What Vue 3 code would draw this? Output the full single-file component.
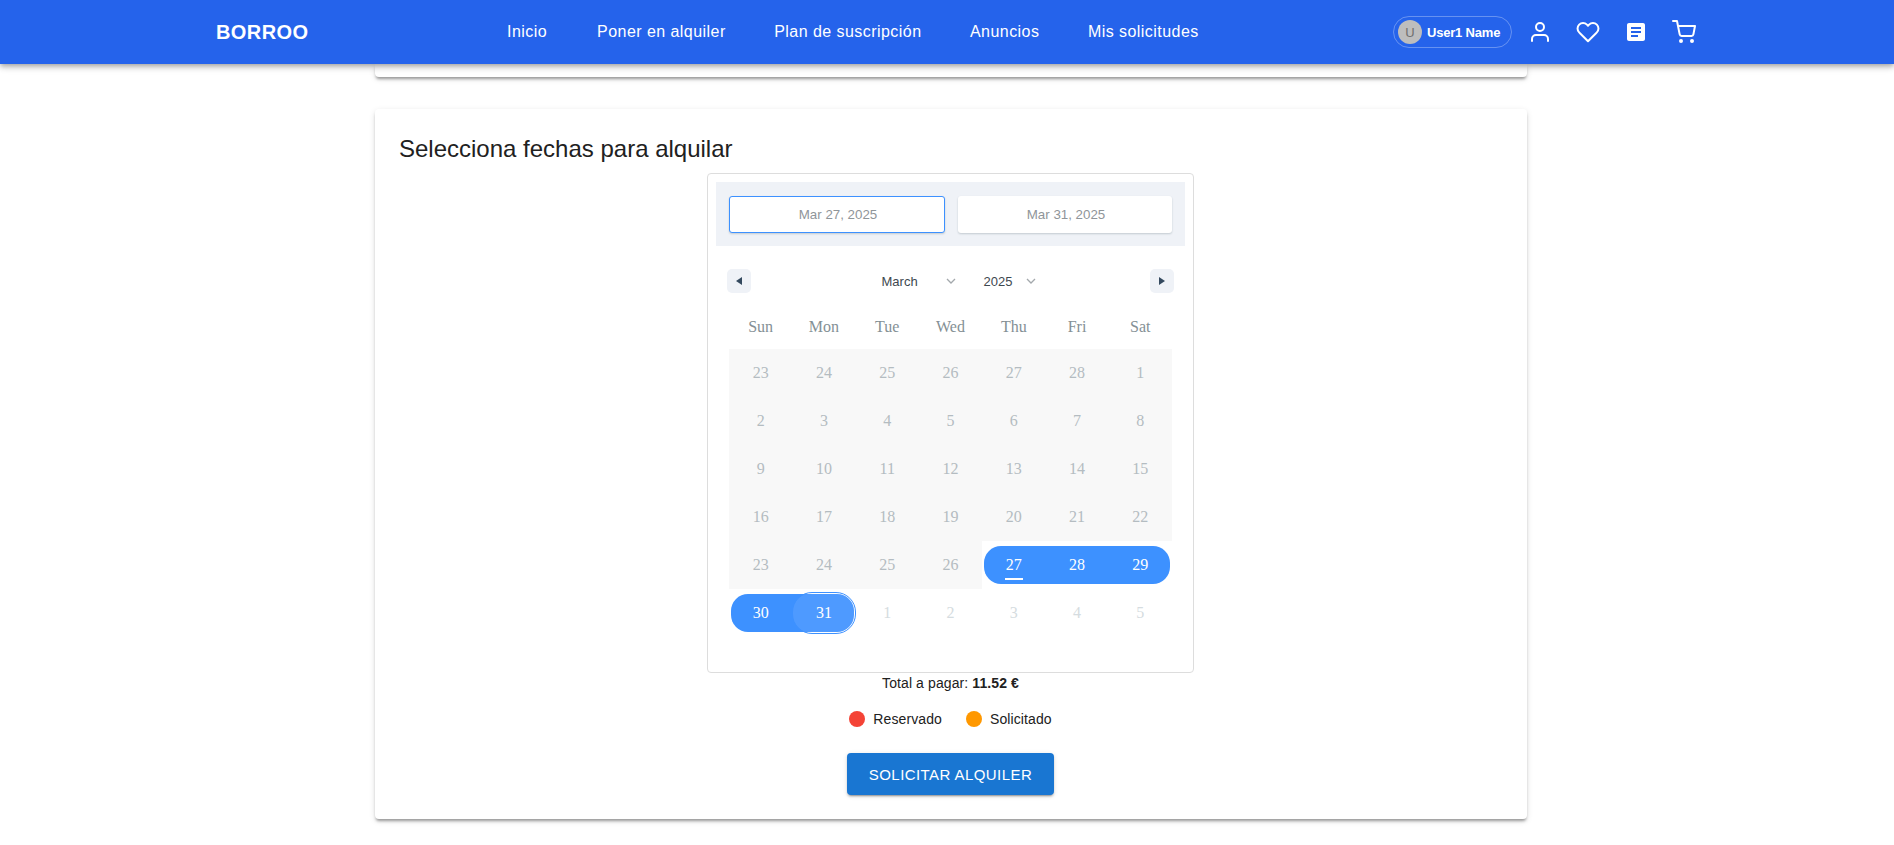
<script setup>
const links = ["Inicio", "Poner en alquiler", "Plan de suscripción", "Anuncios", "Mis solicitudes"];
const weekdays = ["Sun", "Mon", "Tue", "Wed", "Thu", "Fri", "Sat"];

// disabled = greyed past days, passive = next month
const days = [];
const numbers = [23, 24, 25, 26, 27, 28, 1, 2, 3, 4, 5, 6, 7, 8, 9, 10, 11, 12, 13, 14, 15, 16, 17, 18, 19, 20, 21, 22, 23, 24, 25, 26];
numbers.forEach((n) => days.push({ n, state: "disabled" }));
days.push({ n: 27, state: "range", start: true, today: true });
days.push({ n: 28, state: "range" });
days.push({ n: 29, state: "range", end: true });
days.push({ n: 30, state: "range", start: true });
days.push({ n: 31, state: "range", end: true, preview: true });
[1, 2, 3, 4, 5].forEach((n) => days.push({ n, state: "passive" }));
</script>

<template>
  <div class="page">
    <header class="topbar">
      <div class="logo">BORROO</div>
      <nav class="links">
        <a v-for="link in links" :key="link">{{ link }}</a>
      </nav>
      <div class="actions">
        <div class="chip">
          <span class="avatar">U</span>
          <span class="chip-name">User1 Name</span>
        </div>
        <svg class="icon" viewBox="0 0 24 24">
          <path d="M20 21v-2a4 4 0 0 0-4-4H8a4 4 0 0 0-4 4v2" />
          <circle cx="12" cy="7" r="4" />
        </svg>
        <svg class="icon" viewBox="0 0 24 24">
          <path d="M20.84 4.61a5.5 5.5 0 0 0-7.78 0L12 5.67l-1.06-1.06a5.5 5.5 0 0 0-7.78 7.78l1.06 1.06L12 21.23l7.78-7.78 1.06-1.06a5.5 5.5 0 0 0 0-7.78z" />
        </svg>
        <svg class="icon filled" viewBox="0 0 24 24">
          <path d="M19 3H5c-1.1 0-2 .9-2 2v14c0 1.1.9 2 2 2h14c1.1 0 2-.9 2-2V5c0-1.1-.9-2-2-2zm-5 14H7v-2h7v2zm3-4H7v-2h10v2zm0-4H7V7h10v2z" />
        </svg>
        <svg class="icon" viewBox="0 0 24 24">
          <circle cx="9" cy="21" r="1" />
          <circle cx="20" cy="21" r="1" />
          <path d="M1 1h4l2.68 13.39a2 2 0 0 0 2 1.61h9.72a2 2 0 0 0 2-1.61L23 6H6" />
        </svg>
      </div>
    </header>

    <main class="content">
      <div class="card sliver"></div>

      <section class="card booking">
        <h2>Selecciona fechas para alquilar</h2>

        <div class="calendar">
          <div class="range-inputs">
            <div class="date-field active">Mar 27, 2025</div>
            <div class="date-field">Mar 31, 2025</div>
          </div>

          <div class="month-nav">
            <button class="nav-btn"><i class="arrow left"></i></button>
            <div class="pickers">
              <div class="picker month">
                <span>March</span>
                <svg class="chevron" viewBox="0 0 10 6"><path d="M1 1l4 4 4-4" /></svg>
              </div>
              <div class="picker year">
                <span>2025</span>
                <svg class="chevron" viewBox="0 0 10 6"><path d="M1 1l4 4 4-4" /></svg>
              </div>
            </div>
            <button class="nav-btn"><i class="arrow right"></i></button>
          </div>

          <div class="weekdays">
            <span v-for="day in weekdays" :key="day">{{ day }}</span>
          </div>

          <div class="days">
            <div v-for="(day, i) in days" :key="i" class="day" :class="day.state">
              <span v-if="day.state === 'range'" class="fill" :class="{ start: day.start, end: day.end }"></span>
              <span v-if="day.preview" class="preview"></span>
              <span class="num">{{ day.n }}</span>
              <span v-if="day.today" class="today"></span>
            </div>
          </div>
        </div>

        <p class="total">Total a pagar: <strong>11.52 €</strong></p>

        <div class="legend">
          <span class="legend-item"><i class="dot red"></i>Reservado</span>
          <span class="legend-item"><i class="dot orange"></i>Solicitado</span>
        </div>

        <button class="submit">SOLICITAR ALQUILER</button>
      </section>
    </main>
  </div>
</template>

<style>
body {
  background: #fff;
}
</style>

<style scoped>
.page {
  font-family: "Liberation Sans", Arial, sans-serif;
  color: #212121;
  min-height: 845px;
}

.topbar {
  position: relative;
  z-index: 10;
  display: flex;
  align-items: center;
  height: 64px;
  padding: 0 198px 0 216px;
  background: #2563eb;
  color: #fff;
  box-shadow: 0 2px 4px -1px rgba(0, 0, 0, 0.2), 0 4px 5px rgba(0, 0, 0, 0.14), 0 1px 10px rgba(0, 0, 0, 0.12);
}
.logo {
  font-size: 20px;
  font-weight: 700;
  letter-spacing: 0.4px;
  width: 291px;
}
.links {
  display: flex;
  gap: 48.5px;
  font-size: 16px;
  letter-spacing: 0.45px;
}
.links a:first-child {
  margin-right: 1.5px;
}
.actions {
  display: flex;
  align-items: center;
  gap: 24px;
  margin-left: auto;
}
.chip {
  display: flex;
  align-items: center;
  gap: 5px;
  box-sizing: border-box;
  width: 119px;
  height: 32px;
  margin-right: -8px;
  padding-left: 4px;
  border: 1px solid rgba(255, 255, 255, 0.3);
  border-radius: 16px;
}
.avatar {
  display: flex;
  align-items: center;
  justify-content: center;
  width: 24px;
  height: 24px;
  border-radius: 50%;
  background: #bdbdbd;
  color: #6f6f6f;
  font-size: 13px;
}
.chip-name {
  font-size: 13px;
  font-weight: 700;
  letter-spacing: -0.2px;
}
.icon {
  width: 24px;
  height: 24px;
  fill: none;
  stroke: #fff;
  stroke-width: 2;
  stroke-linecap: round;
  stroke-linejoin: round;
}
.icon.filled {
  fill: #fff;
  stroke: none;
}

.content {
  display: flex;
  flex-direction: column;
  gap: 32px;
  width: 1152px;
  margin-left: 375px;
}
.card {
  background: #fff;
  border-radius: 4px;
  box-shadow: 0 3px 3px -1px rgba(0, 0, 0, 0.35), 0 2px 6px rgba(0, 0, 0, 0.12);
}
.sliver {
  height: 13px;
  border-radius: 0 0 4px 4px;
}
.booking {
  display: flex;
  flex-direction: column;
  align-items: center;
  padding: 26px 25px 24px 24px;
}
.booking h2 {
  align-self: flex-start;
  margin: 0 0 10px;
  font-size: 24px;
  font-weight: 400;
  line-height: 28px;
}

.calendar {
  box-sizing: border-box;
  width: 487px;
  height: 500px;
  padding: 8px;
  border: 1px solid #ddd;
  border-radius: 4px;
}
.range-inputs {
  display: flex;
  gap: 13px;
  height: 64px;
  box-sizing: border-box;
  padding: 14px 13px 13px;
  background: #eff2f7;
}
.date-field {
  flex: 1;
  display: flex;
  align-items: center;
  justify-content: center;
  padding-left: 2px;
  background: #fff;
  border-radius: 3px;
  color: #8f9599;
  font-size: 13.33px;
  box-shadow: 0 1px 2px rgba(35, 57, 66, 0.21);
}
.date-field.active {
  border: 1px solid #3d91ff;
}

.month-nav {
  display: flex;
  align-items: center;
  justify-content: space-between;
  padding: 23px 11px 0;
}
.nav-btn {
  display: flex;
  align-items: center;
  justify-content: center;
  width: 24px;
  height: 24px;
  padding: 0;
  border: 0;
  border-radius: 5px;
  background: #eff2f7;
}
.arrow {
  width: 0;
  height: 0;
  border-style: solid;
  border-color: transparent;
}
.arrow.left {
  border-width: 4px 6px 4px 0;
  border-right-color: #34495e;
}
.arrow.right {
  border-width: 4px 0 4px 6px;
  border-left-color: #34495e;
}
.pickers {
  display: flex;
  gap: 24px;
  font-size: 13px;
  color: #3e484f;
}
.picker {
  display: flex;
  align-items: center;
  justify-content: space-between;
}
.picker.month {
  width: 94px;
  box-sizing: border-box;
  padding: 0 4px 0 16px;
}
.picker.year {
  width: 52px;
  box-sizing: border-box;
}
.chevron {
  width: 10px;
  height: 6px;
  fill: none;
  stroke: #a3a8ac;
  stroke-width: 1.3;
}

.weekdays {
  display: grid;
  grid-template-columns: repeat(7, 1fr);
  height: 44px;
  margin: 12px 13px 0;
  align-items: center;
  text-align: center;
  font-family: "Liberation Serif", "Times New Roman", serif;
  font-size: 16px;
  color: #849095;
}
.days {
  display: grid;
  grid-template-columns: repeat(7, 1fr);
  grid-auto-rows: 48px;
  margin: 0 13px;
  font-family: "Liberation Serif", "Times New Roman", serif;
  font-size: 16px;
}
.day {
  position: relative;
  display: flex;
  align-items: center;
  justify-content: center;
}
.day.disabled {
  background: #f8f8f8;
  color: #b4bcc1;
}
.day.passive {
  color: #d5dce0;
}
.day.range {
  color: #fff;
}
.num {
  position: relative;
  z-index: 2;
}
.fill {
  position: absolute;
  top: 5px;
  bottom: 5px;
  left: 0;
  right: 0;
  background: #3d91ff;
}
.fill.start {
  left: 2px;
  border-top-left-radius: 17px;
  border-bottom-left-radius: 17px;
}
.fill.end {
  right: 2px;
  border-top-right-radius: 17px;
  border-bottom-right-radius: 17px;
}
.preview {
  position: absolute;
  z-index: 1;
  top: 3px;
  bottom: 3px;
  left: 0;
  right: 0;
  border: 1px solid #3d91ff;
  border-radius: 20px;
  background: rgba(255, 255, 255, 0.09);
}
.today {
  position: absolute;
  z-index: 2;
  left: 50%;
  top: 37px;
  width: 18px;
  height: 2px;
  margin-left: -9px;
  background: #fff;
}

.total {
  margin: 0;
  font-size: 14px;
  line-height: 20px;
  letter-spacing: 0.1px;
}
.legend {
  display: flex;
  gap: 24px;
  margin-top: 16px;
  font-size: 14px;
  line-height: 20px;
  letter-spacing: 0.1px;
}
.legend-item {
  display: flex;
  align-items: center;
  gap: 8px;
}
.dot {
  width: 16px;
  height: 16px;
  border-radius: 50%;
}
.dot.red {
  background: #f44336;
}
.dot.orange {
  background: #ff9800;
}
.submit {
  width: 207px;
  height: 42px;
  margin-top: 24px;
  padding: 0;
  border: 0;
  border-radius: 4px;
  background: #1976d2;
  color: #fff;
  font-family: inherit;
  font-size: 15px;
  letter-spacing: 0.43px;
  box-shadow: 0 3px 1px -2px rgba(0, 0, 0, 0.2), 0 2px 2px rgba(0, 0, 0, 0.14), 0 1px 5px rgba(0, 0, 0, 0.12);
}
</style>
